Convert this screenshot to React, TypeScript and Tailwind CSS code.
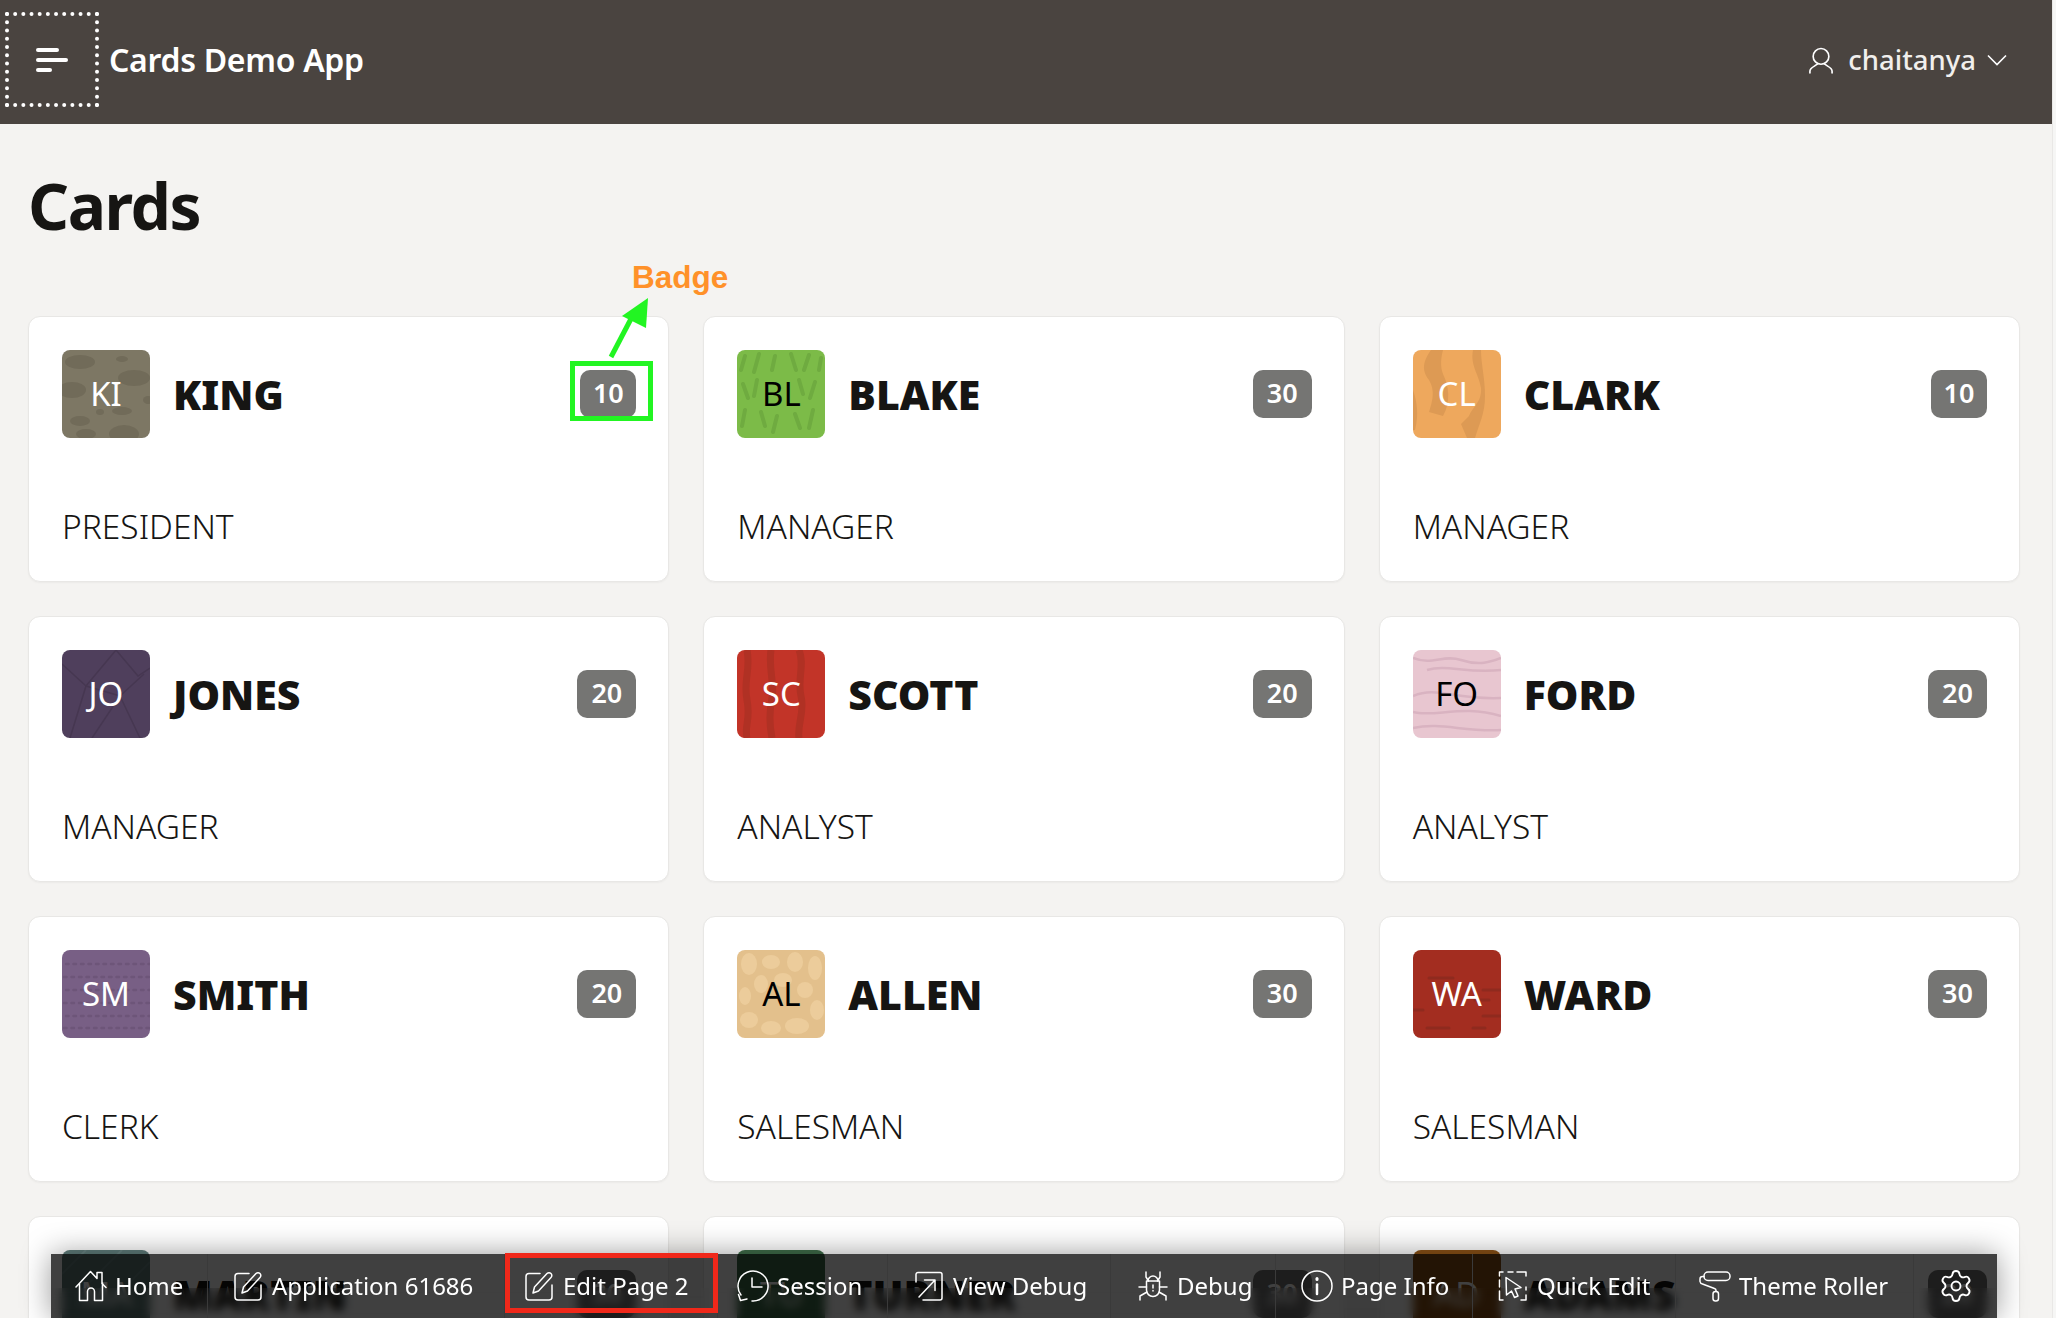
import { Settings } from 'lucide-react';
import type { ReactNode } from 'react';

// Avatar textures are small drawings, one per colour swatch
const blobs = (
  <>
    <ellipse cx="18" cy="12" rx="15" ry="7" />
    <ellipse cx="60" cy="9" rx="6" ry="3" />
    <ellipse cx="72" cy="28" rx="16" ry="8" />
    <ellipse cx="10" cy="40" rx="14" ry="8" />
    <ellipse cx="38" cy="62" rx="4" ry="3" />
    <ellipse cx="60" cy="61" rx="10" ry="4" />
    <ellipse cx="18" cy="71" rx="10" ry="5" />
    <ellipse cx="24" cy="84" rx="10" ry="5" />
    <ellipse cx="62" cy="84" rx="15" ry="9" />
    <ellipse cx="86" cy="50" rx="5" ry="4" />
  </>
);

const leaves = (
  <g strokeWidth="4" strokeLinecap="round" fill="none">
    <path d="M8 6l-4 14M22 4l-5 18M38 6l-3 14M54 4l5 16M72 5l-5 15M84 8l-2 12" />
    <path d="M6 34l5 14M20 30l-3 16M62 30l4 14M78 32l-5 16" />
    <path d="M8 60l-3 16M24 62l4 14M40 66l-4 16M58 64l5 14M76 60l-4 18" />
  </g>
);

const stains = (
  <>
    <path d="M18 0c-10 14-8 22-2 30 6 10 4 20 0 32l14 4c8-14 6-30 0-42-3-8-2-16 0-24z" />
    <path d="M60 0c-3 16 6 24 8 38 1 14-8 18-12 28l-8 8 6 14h8c4-14 10-24 10-42S68 14 68 0z" />
    <path d="M0 40c4 12 6 24 2 40H0z" />
  </>
);

const cracks = (
  <g strokeWidth="1.5" fill="none">
    <path d="M0 14l24 22 30-36M54 0l22 26 12-8M24 36L8 88M24 36l34 10 24-22M58 46L30 88M58 46l20 42" />
  </g>
);

const bark = (
  <g strokeWidth="7" fill="none">
    <path d="M10 0c4 20-4 30 0 50s-3 26 0 38M34 0c-3 18 4 34 1 48s-2 30 0 40M62 0c6 14-2 30 2 46s-4 28-2 42" />
  </g>
);

const waves = (
  <g strokeWidth="2.5" fill="none">
    <path d="M0 8c20 8 30-4 48 2s30 2 40-2M14 20c20-6 40 4 74 0M0 46c24-10 40 4 88 2M0 62c20 6 50-8 88 4M0 78c28-6 50 4 88 2" />
  </g>
);

const dots = (
  <g strokeWidth="2.5" strokeDasharray="2.5 5" strokeLinecap="round" fill="none">
    <path d="M4 14H88M2 27H88M4 40H88M2 53H88M4 66H88M2 78H88" />
  </g>
);

const pebbles = (
  <>
    <ellipse cx="12" cy="14" rx="8" ry="11" />
    <ellipse cx="34" cy="12" rx="9" ry="7" />
    <ellipse cx="58" cy="12" rx="8" ry="10" />
    <ellipse cx="78" cy="18" rx="7" ry="12" />
    <ellipse cx="24" cy="34" rx="7" ry="9" />
    <ellipse cx="46" cy="30" rx="9" ry="7" />
    <ellipse cx="68" cy="40" rx="8" ry="8" />
    <ellipse cx="8" cy="46" rx="6" ry="9" />
    <ellipse cx="80" cy="60" rx="7" ry="10" />
    <ellipse cx="12" cy="70" rx="9" ry="8" />
    <ellipse cx="34" cy="78" rx="10" ry="7" />
    <ellipse cx="60" cy="76" rx="12" ry="8" />
  </>
);

const streaks = (
  <g strokeWidth="3" strokeLinecap="round" fill="none">
    <path d="M16 28H40M70 40H88M62 50H76M60 78H72M14 78H36M70 66H88M0 60H10" />
  </g>
);

const lightDiag = (
  <g strokeWidth="2" fill="none">
    <path d="M0 24L24 0M10 50L60 0M40 60L88 12" />
  </g>
);

type Person = {
  name: string;
  initials: string;
  job: string;
  dept: number;
  bg: string;
  ink: string;
  fg: string;
  art?: ReactNode;
};

const people: Person[] = [
  { name: 'KING', initials: 'KI', job: 'PRESIDENT', dept: 10, bg: '#7d7764', ink: '#716b59', fg: 'text-white', art: blobs },
  { name: 'BLAKE', initials: 'BL', job: 'MANAGER', dept: 30, bg: '#7cbb48', ink: '#6fab40', fg: 'text-black', art: leaves },
  { name: 'CLARK', initials: 'CL', job: 'MANAGER', dept: 10, bg: '#eea85d', ink: '#dd9a54', fg: 'text-white', art: stains },
  { name: 'JONES', initials: 'JO', job: 'MANAGER', dept: 20, bg: '#4f3f5c', ink: '#463751', fg: 'text-white', art: cracks },
  { name: 'SCOTT', initials: 'SC', job: 'ANALYST', dept: 20, bg: '#c23428', ink: '#b03124', fg: 'text-white', art: bark },
  { name: 'FORD', initials: 'FO', job: 'ANALYST', dept: 20, bg: '#e8c6d0', ink: '#d9b3c1', fg: 'text-black', art: waves },
  { name: 'SMITH', initials: 'SM', job: 'CLERK', dept: 20, bg: '#785f85', ink: '#6d5579', fg: 'text-white', art: dots },
  { name: 'ALLEN', initials: 'AL', job: 'SALESMAN', dept: 30, bg: '#e3c08c', ink: '#eccc9b', fg: 'text-black', art: pebbles },
  { name: 'WARD', initials: 'WA', job: 'SALESMAN', dept: 30, bg: '#a32d20', ink: '#8f2a1e', fg: 'text-white', art: streaks },
  { name: 'MARTIN', initials: 'MA', job: 'SALESMAN', dept: 30, bg: '#5f7c7a', ink: '#6b8785', fg: 'text-white', art: lightDiag },
  { name: 'TURNER', initials: 'TU', job: 'SALESMAN', dept: 30, bg: '#3f6d49', ink: '#39653f', fg: 'text-white' },
  { name: 'ADAMS', initials: 'AD', job: 'CLERK', dept: 20, bg: '#8b5216', ink: '#7f4a12', fg: 'text-white' },
];

function PersonCard({ person }: { person: Person }) {
  return (
    <div className="h-[266px] rounded-xl border border-[#e8e7e5] bg-white px-[32px] pl-[33px] pt-[33px] shadow-[0_1px_2px_rgba(0,0,0,0.04)]">
      <div className="flex items-center">
        <div
          className="relative flex h-[88px] w-[88px] shrink-0 items-center justify-center overflow-hidden rounded-lg"
          style={{ backgroundColor: person.bg }}
        >
          <svg
            viewBox="0 0 88 88"
            className="absolute inset-0 h-full w-full"
            fill={person.ink}
            stroke={person.ink}
            strokeWidth="0"
          >
            {person.art}
          </svg>
          <span className={`relative text-[33px] ${person.fg}`}>{person.initials}</span>
        </div>
        <div className="ml-[23px] flex-1 text-[41px] leading-none font-black text-[#161513]">{person.name}</div>
        <div
          className={`mt-[-1px] flex h-[48px] items-center justify-center rounded-[10px] bg-[#757573] text-[27px] font-semibold text-white ${
            person.dept === 10 ? 'w-[56px]' : 'w-[59px]'
          }`}
        >
          {person.dept}
        </div>
      </div>
      <div className="mt-[66px] text-[33.5px] leading-[44px] font-light text-[#161513]">{person.job}</div>
    </div>
  );
}

const stroke = {
  fill: 'none',
  stroke: 'currentColor',
  strokeWidth: 1.5,
  strokeLinecap: 'round' as const,
  strokeLinejoin: 'round' as const,
};

function Glyph({ children, w = 32 }: { children: ReactNode; w?: number }) {
  return (
    <svg viewBox="0 0 32 32" width={w} height={32} className="shrink-0" {...stroke}>
      {children}
    </svg>
  );
}

const HomeIcon = () => (
  <Glyph>
    <path d="M1 17L15.5 1.5 22 8.5V2.5H27V13.5L31 17.5" />
    <path d="M4.5 14V30.5H12.5V21.5a3.5 3.5 0 0 1 7 0V30.5H27.5V13" />
  </Glyph>
);

const EditIcon = () => (
  <Glyph>
    <path d="M17 3.5H6a3 3 0 0 0-3 3V27a3 3 0 0 0 3 3H26a3 3 0 0 0 3-3V15" />
    <path d="M10 23l1.5-6L24 3.5a2.6 2.6 0 0 1 4 4L15.5 21z" />
  </Glyph>
);

const SessionIcon = () => (
  <Glyph>
    <path d="M4 25A15 15 0 1 1 15 31" />
    <path d="M15 8V17H25" />
    <path d="M1.5 24.5L3.5 30.5 10 29" />
  </Glyph>
);

const ViewDebugIcon = () => (
  <Glyph>
    <path d="M3 12V4.5A2 2 0 0 1 5 2.5H27A2 2 0 0 1 29 4.5V28A2 2 0 0 1 27 30H10" />
    <path d="M6 27L22 10M11.5 10H22V20.5" />
  </Glyph>
);

const BugIcon = () => (
  <Glyph>
    <path d="M11 11a5 5 0 0 1 10 0M9.5 11H22.5V20a6.5 6.5 0 0 1-13 0z" />
    <path d="M16 15v3M16 20.5v.5" />
    <path d="M9 2v5l2.5 4M23 2v5l-2.5 4M2 17H9.5M22.5 17H30M3 30v-4l7-4M29 30v-4l-7-4" />
  </Glyph>
);

const InfoIcon = () => (
  <Glyph>
    <circle cx="16" cy="16" r="15" />
    <path d="M16 14.5V24" strokeWidth="2.5" />
    <path d="M16 8.5V9.5" strokeWidth="3" />
  </Glyph>
);

const QuickEditIcon = () => (
  <Glyph>
    <path d="M6 2H2.5V6M2.5 10V17M2.5 21V30H6M11 2H16M20 2H25M24 2H29V6M29 25V30H24M29 17V20" />
    <path d="M9 7.5L24 17.5 18 19 21 26 17.5 27.5 14.5 21 9.5 25z" />
  </Glyph>
);

const RollerIcon = () => (
  <Glyph>
    <rect x="5" y="2" width="26" height="8.5" rx="4" />
    <path d="M5 6.5H3.5A2.5 2.5 0 0 0 1 9v2.5A3 3 0 0 0 3.5 14l12 4.5A2 2 0 0 1 17 20.5v1" />
    <rect x="14" y="21.5" width="5.5" height="9.5" rx="2.5" />
  </Glyph>
);

const GearIcon = () => <Settings size={36} strokeWidth={1.25} className="shrink-0" />;

const devItems: { label?: string; width: string; pad: string; icon: ReactNode }[] = [
  { label: 'Home', width: 'w-[157px]', pad: 'pl-[24px]', icon: <HomeIcon /> },
  { label: 'Application 61686', width: 'w-[297px]', pad: 'pl-[24px]', icon: <EditIcon /> },
  { label: 'Edit Page 2', width: 'w-[213px]', pad: 'pl-[18px]', icon: <EditIcon /> },
  { label: 'Session', width: 'w-[170px]', pad: 'pl-[19px]', icon: <SessionIcon /> },
  { label: 'View Debug', width: 'w-[223px]', pad: 'pl-[25px]', icon: <ViewDebugIcon /> },
  { label: 'Debug', width: 'w-[165px]', pad: 'pl-[26px]', icon: <BugIcon /> },
  { label: 'Page Info', width: 'w-[197px]', pad: 'pl-[25px]', icon: <InfoIcon /> },
  { label: 'Quick Edit', width: 'w-[203px]', pad: 'pl-[24px]', icon: <QuickEditIcon /> },
  { label: 'Theme Roller', width: 'w-[238px]', pad: 'pl-[23px]', icon: <RollerIcon /> },
  { width: 'w-[83px]', pad: 'pl-[24px]', icon: <GearIcon /> },
];

export default function App() {
  return (
    <div className="relative flex h-[1318px] w-[2056px] overflow-hidden bg-[#f4f3f1] font-['Noto_Sans',sans-serif]">
      <div className="w-[2052px] shrink-0">
        {/* Header */}
        <header className="flex h-[124px] items-center bg-[#4a4440] text-white">
          <div className="ml-[5px] mt-[-5px] flex h-[95px] w-[94px] items-center justify-center border-4 border-dotted border-white">
            <svg viewBox="0 0 32 24" width="32" height="24" fill="white">
              <rect x="0" y="0" width="23" height="4" rx="2" />
              <rect x="0" y="10" width="32" height="4" rx="2" />
              <rect x="0" y="20" width="16" height="4" rx="2" />
            </svg>
          </div>
          <div className="ml-[10px] mt-[-4px] text-[32px] font-semibold tracking-[-0.3px]">Cards Demo App</div>
          <div className="ml-auto mr-[45px] mt-[-4px] flex items-center">
            <svg viewBox="0 0 26 30" width="24" height="28" fill="none" stroke="currentColor" strokeWidth="1.8" strokeLinecap="round" className="mt-[2px]">
              <circle cx="13" cy="10" r="8.5" />
              <path d="M1 28v-2c0-4 5-5 8-7.5M25 28v-2c0-4-5-5-8-7.5" />
            </svg>
            <span className="ml-[15px] text-[27.5px] font-medium text-[#f1efed]">chaitanya</span>
            <svg viewBox="0 0 20 12" width="20" height="12" className="ml-[11px]" fill="none" stroke="currentColor" strokeWidth="1.6">
              <path d="M1 1.5l9 9 9-9" />
            </svg>
          </div>
        </header>

        {/* Title */}
        <h1 className="pl-[28px] pt-[42px] text-[64px] leading-[80px] font-bold tracking-[-1.4px] text-[#161513]">Cards</h1>

        {/* Cards */}
        <div className="mt-[70px] grid grid-cols-3 gap-x-[34px] gap-y-[34px] pl-[28px] pr-[32px]">
          {people.map((person) => (
            <PersonCard key={person.name} person={person} />
          ))}
        </div>
      </div>
      <div className="w-[4px] shrink-0 border-l border-[#e9e8e6] bg-[#f6f6f5]" />

      {/* Developer toolbar */}
      <div className="absolute bottom-0 left-[51px] h-[64px] w-[1946px] bg-black/75 shadow-[0_0_30px_rgba(0,0,0,0.4)]">
        <div className="absolute inset-x-0 bottom-0 h-[30px] backdrop-blur-[5px]" />
        <div className="relative flex h-full">
          {devItems.map((item, i) => (
            <div
              key={i}
              className={`flex h-full items-center gap-[8px] border-r border-[#3a3a3a] text-white ${item.width} ${item.pad} ${item.label ? '' : 'border-r-0'}`}
            >
              {item.icon}
              {item.label && <span className="text-[24px] whitespace-nowrap">{item.label}</span>}
            </div>
          ))}
        </div>
      </div>

      {/* Annotations */}
      <div className="absolute left-[632px] top-[258px] text-[31.5px] leading-[38px] font-bold text-[#ff9129] font-['Liberation_Sans',sans-serif]">
        Badge
      </div>
      <svg className="absolute left-[600px] top-[295px]" width="60" height="66" viewBox="0 0 60 66" fill="#22f522">
        <path d="M11 62L33 20" stroke="#22f522" strokeWidth="5" />
        <path d="M48 3L22 21 46 33z" />
      </svg>
      <div className="absolute left-[570px] top-[361px] h-[60px] w-[83px] border-[5px] border-[#22f522]" />
      <div className="absolute left-[505px] top-[1253px] h-[60px] w-[213px] border-[5px] border-[#f0281a]" />
    </div>
  );
}
